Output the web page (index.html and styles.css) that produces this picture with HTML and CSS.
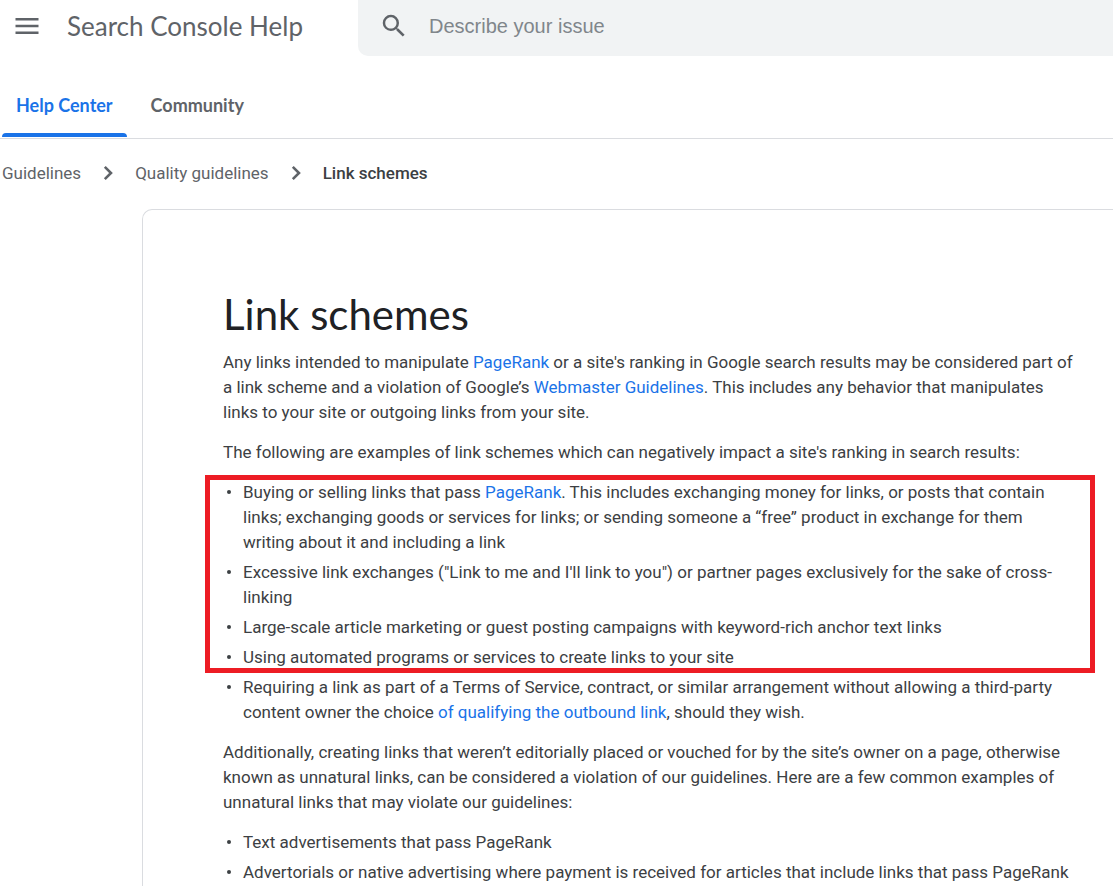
FILE: index.html
```html
<!DOCTYPE html>
<html lang="en">
<head>
  <meta charset="UTF-8">
  <meta name="viewport" content="width=device-width, initial-scale=1.0">
  <title>Link schemes - Search Console Help</title>
  <link rel="stylesheet" href="styles.css">
</head>
<body>
  <header class="header">
    <button class="menu-button" type="button" aria-label="Main menu">
      <svg width="24" height="18" viewBox="0 0 24 18"><path d="M0.5 1h23v2.4h-23zM0.5 7.8h23v2.4h-23zM0.5 14.6h23V17h-23z" fill="#5f6368"/></svg>
    </button>
    <a class="product" href="#">Search Console Help</a>
    <form class="search">
      <button class="search-button" type="button" aria-label="Search">
        <svg width="30" height="30" viewBox="0 0 24 24"><path d="M15.5 14h-.79l-.28-.27A6.47 6.47 0 0 0 16 9.5 6.5 6.5 0 1 0 9.5 16c1.61 0 3.09-.59 4.23-1.57l.27.28v.79l5 4.99L20.49 19l-4.99-5zm-6 0C7.01 14 5 11.99 5 9.5S7.01 5 9.5 5 14 7.01 14 9.5 11.99 14 9.5 14z" fill="#5f6368"/></svg>
      </button>
      <input class="search-input" type="text" placeholder="Describe your issue" aria-label="Describe your issue">
    </form>
  </header>

  <nav class="tabs">
    <a class="tab tab-active" href="#">Help Center</a>
    <a class="tab" href="#">Community</a>
  </nav>

  <nav class="breadcrumbs" aria-label="Breadcrumb">
    <a href="#">Guidelines</a>
    <svg class="chevron" width="10" height="16" viewBox="0 0 10 16"><path d="M1.8 1.8L8 8l-6.2 6.2" fill="none" stroke="#5f6368" stroke-width="2.6"/></svg>
    <a href="#">Quality guidelines</a>
    <svg class="chevron" width="10" height="16" viewBox="0 0 10 16"><path d="M1.8 1.8L8 8l-6.2 6.2" fill="none" stroke="#5f6368" stroke-width="2.6"/></svg>
    <a class="current" href="#">Link schemes</a>
  </nav>

  <main class="article">
    <h1>Link schemes</h1>
    <p>Any links intended to manipulate <a href="#">PageRank</a> or a site's ranking in Google search results may be considered part of a link scheme and a violation of Google’s <a href="#">Webmaster Guidelines</a>. This includes any behavior that manipulates links to your site or outgoing links from your site.</p>
    <p>The following are examples of link schemes which can negatively impact a site's ranking in search results:</p>
    <ul class="highlighted">
      <li>Buying or selling links that pass <a href="#">PageRank</a>. This includes exchanging money for links, or posts that contain links; exchanging goods or services for links; or sending someone a “free” product in exchange for them writing about it and including a link</li>
      <li>Excessive link exchanges ("Link to me and I'll link to you") or partner pages exclusively for the sake of cross-linking</li>
      <li>Large-scale article marketing or guest posting campaigns with keyword-rich anchor text links</li>
      <li>Using automated programs or services to create links to your site</li>
      <li>Requiring a link as part of a Terms of Service, contract, or similar arrangement without allowing a third-party content owner the choice <a href="#">of qualifying the outbound link</a>, should they wish.</li>
    </ul>
    <p>Additionally, creating links that weren’t editorially placed or vouched for by the site’s owner on a page, otherwise known as unnatural links, can be considered a violation of our guidelines. Here are a few common examples of unnatural links that may violate our guidelines:</p>
    <ul>
      <li>Text advertisements that pass PageRank</li>
      <li>Advertorials or native advertising where payment is received for articles that include links that pass PageRank</li>
    </ul>
  </main>
</body>
</html>
```
FILE: styles.css
```css
*,
*::before,
*::after {
  box-sizing: border-box;
}

body {
  margin: 0;
  min-height: 100vh;
  display: flex;
  flex-direction: column;
  background-color: #fff;
  color: #3c4043;
  font-family: Roboto, "Liberation Sans", sans-serif;
  font-size: 17px;
  line-height: 25px;
}

a {
  color: #1a73e8;
  text-decoration: none;
}

button {
  display: flex;
  padding: 0;
  border: 0;
  background: none;
}

/* Header */
.header {
  display: flex;
  height: 56px;
  padding-left: 15px;
}

.menu-button {
  align-items: center;
  width: 52px;
  height: 52px;
}

.product {
  width: 291px;
  color: #5f6368;
  font-family: Lato, sans-serif;
  font-size: 26px;
  line-height: 52px;
}

.search {
  flex: 1;
  display: flex;
  align-items: center;
  gap: 20px;
  padding: 0 0 4px 21px;
  background-color: #f1f3f4;
  border-bottom-left-radius: 10px;
}

.search-input {
  flex: 1;
  padding: 0;
  border: 0;
  outline: 0;
  background: none;
  font-family: "Liberation Sans", sans-serif;
  font-size: 20px;
}

.search-input::placeholder {
  color: #80868b;
}

/* Tabs */
.tabs {
  display: flex;
  gap: 10px;
  height: 83px;
  padding: 16px 0 0 2px;
  border-bottom: 1px solid #dadce0;
}

.tab {
  position: relative;
  padding: 0 14px;
  color: #5f6368;
  font-family: Lato, sans-serif;
  font-size: 18px;
  font-weight: bold;
  line-height: 66px;
}

.tab-active {
  color: #1a73e8;
}

.tab-active::after {
  content: "";
  position: absolute;
  left: 0;
  right: 0;
  bottom: 1px;
  height: 4px;
  background-color: #1a73e8;
  border-radius: 4px 4px 0 0;
}

/* Breadcrumbs */
.breadcrumbs {
  display: flex;
  align-items: center;
  gap: 22px;
  height: 70px;
  padding: 0 0 2px 2px;
}

.breadcrumbs a {
  color: #5f6368;
}

.breadcrumbs .current {
  color: #3c4043;
  font-weight: 500;
}

/* Article */
.article {
  flex: 1;
  margin-left: 142px;
  padding: 80px 36px 0 80px;
  border: 1px solid #dadce0;
  border-width: 1px 0 0 1px;
  border-top-left-radius: 10px;
}

h1 {
  margin: 0 0 12px;
  color: #202124;
  font-family: Lato, sans-serif;
  font-size: 42px;
  font-weight: normal;
  line-height: 48px;
}

p {
  margin: 0 0 15px;
}

ul {
  margin: 0 0 15px;
  padding: 0;
  list-style: none;
}

li {
  position: relative;
  margin-bottom: 5px;
  padding-left: 20px;
}

li:last-child {
  margin-bottom: 0;
}

li::before {
  content: "";
  position: absolute;
  left: 4px;
  top: 10px;
  width: 4px;
  height: 4px;
  border-radius: 50%;
  background-color: #3c4043;
}

.article ul:last-child {
  margin-bottom: 0;
}

/* Red frame drawn over the first four items */
.highlighted {
  position: relative;
}

.highlighted::after {
  content: "";
  position: absolute;
  top: -5px;
  left: -18px;
  right: -18px;
  height: 198px;
  border: 5px solid #ed1c24;
  pointer-events: none;
}
```
